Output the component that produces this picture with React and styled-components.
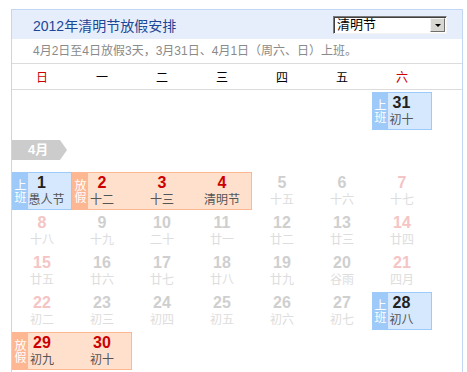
import React from 'react'
import styled, { createGlobalStyle } from 'styled-components'

const GlobalStyle = createGlobalStyle`
  body {
    margin: 0;
    background: #fff;
    font-family: "Liberation Sans", Arial, "Noto Sans CJK SC", sans-serif;
  }
`

const Page = styled.div`
  padding: 9px 0 0 11px;
`

const Box = styled.div`
  width: 452px;
  box-sizing: border-box;
  border: 1px solid #c3d7f4;
  padding-bottom: 12px;
`

const Header = styled.div`
  height: 29px;
  background: #e6eefc;
  display: flex;
  align-items: center;
  justify-content: space-between;
  padding: 0 15px 0 21px;
`

const Title = styled.div`
  font-size: 14px;
  color: #1c4696;
`

const Select = styled.div`
  width: 114px;
  height: 18px;
  box-sizing: border-box;
  display: flex;
  align-items: stretch;
  background: #fff;
  border-top: 1px solid #7a7a7a;
  border-left: 1px solid #7a7a7a;
  border-right: 1px solid #f4f4f4;
  border-bottom: 1px solid #f4f4f4;
  box-shadow: inset 1px 1px 0 #404040;
  margin-top: 1px;
`

const SelectText = styled.span`
  flex: 1;
  font-size: 13px;
  line-height: 16px;
  padding-left: 3px;
  color: #000;
`

const SelectButton = styled.span`
  width: 15px;
  margin: 1px 1px 1px 0;
  box-sizing: border-box;
  background: #d8d6d0;
  border-top: 1px solid #f4f4f4;
  border-left: 1px solid #f4f4f4;
  border-right: 1px solid #6e6e6e;
  border-bottom: 1px solid #6e6e6e;
  display: flex;
  align-items: center;
  justify-content: center;

  &::after {
    content: '';
    border-left: 3px solid transparent;
    border-right: 3px solid transparent;
    border-top: 3px solid #000;
    margin-top: 1px;
  }
`

const Note = styled.div`
  height: 24px;
  line-height: 24px;
  font-size: 12px;
  color: #8a8a8a;
  padding-left: 21px;
  border-bottom: 1px solid #dcdcdc;
`

const Week = styled.div`
  display: grid;
  grid-template-columns: repeat(7, 60px);
  height: 25px;
  align-items: center;
  border-bottom: 1px solid #dcdcdc;
  font-size: 12px;
`

const WeekDay = styled.span`
  text-align: center;
  color: ${p => (p.$red ? '#cc0000' : '#000')};
`

const Body = styled.div`
  padding-top: 2px;
  display: flex;
  flex-direction: column;
`

const Row = styled.div`
  display: grid;
  grid-template-columns: repeat(7, 60px);
  height: 38px;
  margin-bottom: 2px;
`

const MonthTag = styled.div`
  width: 55px;
  height: 20px;
  margin: 8px 0 12px;
  background: #cccccc;
  clip-path: polygon(0 0, calc(100% - 7px) 0, 100% 50%, calc(100% - 7px) 100%, 0 100%);
  color: #fff;
  font-weight: bold;
  font-size: 13px;
  line-height: 20px;
  padding-left: 16px;
  box-sizing: border-box;
`

const groupColors = {
  work: { strip: '#9dcaf8', fill: '#d5e8fe' },
  off: { strip: '#fdb893', fill: '#fee0cd' },
}

const Group = styled.div`
  grid-column: span ${p => p.$span};
  display: flex;
  background: ${p => groupColors[p.$kind].fill};
  border: 1px solid ${p => groupColors[p.$kind].strip};
  box-sizing: border-box;
`

const Strip = styled.div`
  flex: 0 0 16px;
  margin-left: -1px;
  background: ${p => groupColors[p.$kind].strip};
  display: flex;
  align-items: center;
  justify-content: center;
`

const StripText = styled.span`
  writing-mode: vertical-rl;
  text-orientation: upright;
  color: #fff;
  font-size: 12px;
  line-height: 14px;
  font-family: "Noto Sans CJK SC", sans-serif;
`

const GroupDays = styled.div`
  flex: 1;
  display: grid;
  grid-template-columns: 44px repeat(${p => p.$rest}, 60px);
`

const Day = styled.div`
  display: flex;
  flex-direction: column;
  align-items: center;
  padding-top: ${p => (p.$inGroup ? 1 : 2)}px;
  padding-right: ${p => (p.$lead ? 16 : 0)}px;
  min-width: 0;
`

const dayColor = p => {
  if (p.$kind === 'off') return '#cc0000'
  if (p.$kind === 'work') return '#222'
  return p.$weekend ? '#f5c4c4' : '#cfcfcf'
}

const Num = styled.span`
  font-size: 16px;
  font-weight: bold;
  line-height: 18px;
  color: ${dayColor};
`

const Lunar = styled.span`
  font-size: 12px;
  line-height: 16px;
  color: ${p => (p.$kind ? '#555' : '#dddddd')};
  transform: translateX(${p => p.$shift || 0}px);
  white-space: nowrap;
`

const stripText = { work: '上班', off: '放假' }

const DayCell = ({ d, kind, col, inGroup, lead }) => (
  <Day $inGroup={inGroup} $lead={lead}>
    <Num $kind={kind} $weekend={col === 0 || col === 6}>{d.n}</Num>
    <Lunar $kind={kind} $shift={d.shift}>{d.l}</Lunar>
  </Day>
)

// row items: { n, l } single day, { kind, days } a marked group, null empty
const march = [null, null, null, null, null, null, { kind: 'work', days: [{ n: 31, l: '初十' }] }]

const april = [
  [
    { kind: 'work', days: [{ n: 1, l: '愚人节', shift: 5 }] },
    { kind: 'off', days: [{ n: 2, l: '十二' }, { n: 3, l: '十三' }, { n: 4, l: '清明节' }] },
    { n: 5, l: '十五' },
    { n: 6, l: '十六' },
    { n: 7, l: '十七' },
  ],
  [
    { n: 8, l: '十八' }, { n: 9, l: '十九' }, { n: 10, l: '二十' }, { n: 11, l: '廿一' },
    { n: 12, l: '廿二' }, { n: 13, l: '廿三' }, { n: 14, l: '廿四' },
  ],
  [
    { n: 15, l: '廿五' }, { n: 16, l: '廿六' }, { n: 17, l: '廿七' }, { n: 18, l: '廿八' },
    { n: 19, l: '廿九' }, { n: 20, l: '谷雨' }, { n: 21, l: '四月' },
  ],
  [
    { n: 22, l: '初二' }, { n: 23, l: '初三' }, { n: 24, l: '初四' }, { n: 25, l: '初五' },
    { n: 26, l: '初六' }, { n: 27, l: '初七' },
    { kind: 'work', days: [{ n: 28, l: '初八' }] },
  ],
  [{ kind: 'off', days: [{ n: 29, l: '初九' }, { n: 30, l: '初十' }] }],
]

const WeekRow = ({ items }) => {
  let col = 0
  return (
    <Row>
      {items.map((it, i) => {
        if (!it) {
          col++
          return <div key={i} />
        }
        if (it.days) {
          const start = col
          col += it.days.length
          return (
            <Group key={i} $span={it.days.length} $kind={it.kind}>
              <Strip $kind={it.kind}>
                <StripText>{stripText[it.kind]}</StripText>
              </Strip>
              <GroupDays $rest={it.days.length - 1}>
                {it.days.map((d, j) => (
                  <DayCell key={d.n} d={d} kind={it.kind} col={start + j} inGroup lead={j === 0} />
                ))}
              </GroupDays>
            </Group>
          )
        }
        const c = col++
        return <DayCell key={i} d={it} col={c} />
      })}
    </Row>
  )
}

const weekDays = ['日', '一', '二', '三', '四', '五', '六']

export default function App() {
  return (
    <Page>
      <GlobalStyle />
      <Box>
        <Header>
          <Title>2012年清明节放假安排</Title>
          <Select>
            <SelectText>清明节</SelectText>
            <SelectButton />
          </Select>
        </Header>
        <Note>4月2日至4日放假3天，3月31日、4月1日（周六、日）上班。</Note>
        <Week>
          {weekDays.map((w, i) => (
            <WeekDay key={w} $red={i === 0 || i === 6}>{w}</WeekDay>
          ))}
        </Week>
        <Body>
          <WeekRow items={march} />
          <MonthTag>4月</MonthTag>
          {april.map((r, i) => <WeekRow key={i} items={r} />)}
        </Body>
      </Box>
    </Page>
  )
}
